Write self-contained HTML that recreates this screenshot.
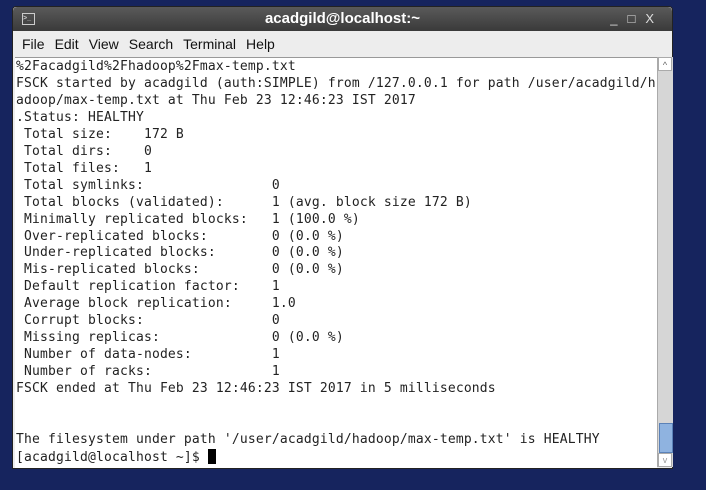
<!DOCTYPE html>
<html><head><style>
body{margin:0;width:706px;height:490px;background:#16245e;overflow:hidden;position:relative;font-family:"Liberation Sans",sans-serif}
.win{position:absolute;left:12px;top:6px;width:661px;height:463px;background:#ededed;border:1px solid #222;box-sizing:border-box;border-radius:4px 4px 0 0}
.title{position:absolute;left:0;top:0;right:0;height:24px;background:linear-gradient(#5a5a5a,#3a3a3a);color:#fff;font-weight:bold;font-size:15px;text-align:center;line-height:24px;border-radius:4px 4px 0 0}
.ctl{position:absolute;right:8px;top:0;color:#ddd;font-size:13px;letter-spacing:10px;font-weight:normal}
.ico{position:absolute;left:9px;top:6px;width:11px;height:10px;border:1px solid #ccc;font-size:7px;line-height:9px;color:#ccc;text-align:left}
.menu{position:absolute;left:0;top:24px;right:0;height:26px;font-size:14px;line-height:26px;color:#111}
.menu span{margin-left:9px;margin-right:1px}
.term{position:absolute;left:2px;top:50px;width:642px;height:410px;background:#fff;border-top:1px solid #999}
pre{margin:0;padding:1px 0 0 1px;font-family:"DejaVu Sans Mono",monospace;font-size:13px;letter-spacing:0.17px;line-height:16.95px;color:#222}
.sb{position:absolute;left:644px;top:50px;width:15px;height:410px;background:#d6d6d6;border-left:1px solid #aaa}
.up{position:absolute;left:0;top:0;width:14px;height:14px;background:#fff;border:1px solid #aaa;box-sizing:border-box;font-size:9px;text-align:center;line-height:14px;color:#666}
.dn{position:absolute;left:0;bottom:0;width:14px;height:14px;background:#fff;border:1px solid #aaa;box-sizing:border-box;font-size:9px;text-align:center;line-height:12px;color:#999}
.thumb{position:absolute;left:1px;top:366px;width:12px;height:28px;background:#8fb3e0;border:1px solid #5b82b8}
.cur{display:inline-block;width:8px;height:15px;background:#000;vertical-align:-3px}
</style></head><body>
<div class="win">
<div class="title"><div class="ico">&gt;_</div>acadgild@localhost:~<span class="ctl">_□X</span></div>
<div class="menu"><span>File</span><span>Edit</span><span>View</span><span>Search</span><span>Terminal</span><span>Help</span></div>
<div class="term"><pre>%2Facadgild%2Fhadoop%2Fmax-temp.txt
FSCK started by acadgild (auth:SIMPLE) from /127.0.0.1 for path /user/acadgild/h
adoop/max-temp.txt at Thu Feb 23 12:46:23 IST 2017
.Status: HEALTHY
 Total size:    172 B
 Total dirs:    0
 Total files:   1
 Total symlinks:                0
 Total blocks (validated):      1 (avg. block size 172 B)
 Minimally replicated blocks:   1 (100.0 %)
 Over-replicated blocks:        0 (0.0 %)
 Under-replicated blocks:       0 (0.0 %)
 Mis-replicated blocks:         0 (0.0 %)
 Default replication factor:    1
 Average block replication:     1.0
 Corrupt blocks:                0
 Missing replicas:              0 (0.0 %)
 Number of data-nodes:          1
 Number of racks:               1
FSCK ended at Thu Feb 23 12:46:23 IST 2017 in 5 milliseconds


The filesystem under path '/user/acadgild/hadoop/max-temp.txt' is HEALTHY
[acadgild@localhost ~]$ <span class="cur"></span></pre></div>
<div class="sb"><div class="up">^</div><div class="thumb"></div><div class="dn">v</div></div>
</div>
</body></html>
